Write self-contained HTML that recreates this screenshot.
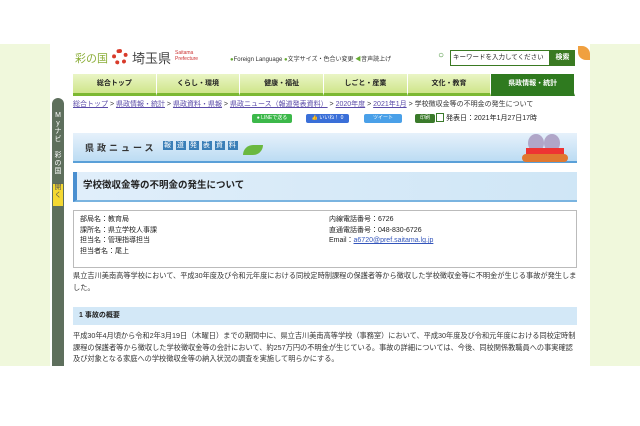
<!DOCTYPE html>
<html><head><meta charset="utf-8"><style>
*{margin:0;padding:0;box-sizing:border-box}
body{width:640px;height:426px;background:#fff;font-family:"Liberation Sans","Noto Sans CJK JP",sans-serif;position:relative;overflow:hidden;color:#222}
.bg{position:absolute;left:0;top:44px;width:640px;height:322px;background:#f0f8dc}
.main{position:absolute;left:50px;top:44px;width:540px;height:322px;background:#fff}
.side{position:absolute;left:52px;top:98px;width:12px;height:268px;background:#5e6f5d;border-radius:8px 8px 0 0;color:#fff;font-size:7px;text-align:center;line-height:8px;padding-top:14px}
.side .o{background:#f5d832;color:#555;margin:8px 1px 0;height:22px}
.a{position:absolute}
.nav{left:73px;top:74px;width:502px;height:22px;display:flex}
.nav div{flex:1;background:linear-gradient(#eaf5c6,#cfe58a);border-bottom:3px solid #7cb832;font-size:7px;font-weight:bold;text-align:center;line-height:19px;border-right:1px solid #fff}
.nav div.on{background:#2f7a1f;color:#fff;border-bottom-color:#2f7a1f}
.bc{left:73px;top:99px;font-size:7px;color:#333;white-space:nowrap}
.bc u{color:#5a4aa8}
.btn{top:114px;height:9px;font-size:5px;color:#fff;border-radius:2px;text-align:center;line-height:9px}
.nh{left:73px;top:133px;width:504px;height:30px;background:linear-gradient(#e6f1fb,#bcdcf3);border-bottom:2px solid #5aa0d8}
.ti{left:73px;top:172px;width:504px;height:30px;background:linear-gradient(90deg,#e0eefa,#cfe6f6);border-left:4px solid #4a8fd0;border-bottom:2px solid #7ab4e0;font-size:9.5px;font-weight:bold;line-height:28px;padding-left:6px}
.info{left:73px;top:210px;width:504px;height:58px;border:1px solid #bbb;font-size:7px;line-height:10.5px;padding:4px 6px}
.p{font-size:7.2px;line-height:11.5px;color:#333}
</style></head><body>
<div class="bg"></div><div class="main"></div>
<div class="side">M<br>y<br>ナ<br>ビ<br><br>彩<br>の<br>国<div class="o">開<br>く</div></div>
<div class="a" style="left:75px;top:50px;font-size:11px;color:#8cae3a">彩の国</div>
<div class="a" style="left:112px;top:49px;width:16px;height:16px;border-radius:50%;border:4px dotted #d83a2a"></div>
<div class="a" style="left:132px;top:48px;font-size:13px;color:#444">埼玉県</div>
<div class="a" style="left:175px;top:50px;font-size:5px;color:#c33;line-height:6px">Saitama<br>Prefecture</div>
<div class="a" style="left:230px;top:54px;font-size:6px;color:#333;white-space:nowrap"><span style="color:#6a3">●</span>Foreign Language <span style="color:#6a3">●</span>文字サイズ・色合い変更 <span style="color:#6a3">◀</span>音声読上げ</div>
<div class="a" style="left:438px;top:50px;font-size:10px;color:#3a8a2a">○</div>
<div class="a" style="left:450px;top:50px;width:100px;height:16px;border:1px solid #3a7a22;font-size:6.5px;line-height:14px;padding-left:2px;white-space:nowrap;overflow:hidden">キーワードを入力してください</div>
<div class="a" style="left:550px;top:50px;width:25px;height:16px;background:#3a7a22;color:#fff;font-size:7px;line-height:16px;text-align:center;font-weight:bold">検索</div>
<div class="a" style="left:578px;top:46px;width:12px;height:14px;background:#f0a040;border-radius:0 8px 0 8px"></div>
<div class="a nav"><div>総合トップ</div><div>くらし・環境</div><div>健康・福祉</div><div>しごと・産業</div><div>文化・教育</div><div class="on">県政情報・統計</div></div>
<div class="a bc"><u>総合トップ</u> &gt; <u>県政情報・統計</u> &gt; <u>県政資料・県報</u> &gt; <u>県政ニュース（報道発表資料）</u> &gt; <u>2020年度</u> &gt; <u>2021年1月</u> &gt; 学校徴収金等の不明金の発生について</div>
<div class="a btn" style="left:252px;width:40px;background:#3cb84a">● LINEで送る</div>
<div class="a btn" style="left:306px;width:43px;background:#3a6fd8">👍 いいね！ 0</div>
<div class="a btn" style="left:364px;width:38px;background:#4aa0e8">ツイート</div>
<div class="a btn" style="left:415px;width:20px;background:#3a7a2a">印刷</div>
<div class="a" style="left:436px;top:113px;width:8px;height:9px;border:1.5px solid #3a7a2a"></div>
<div class="a" style="left:446px;top:113px;font-size:7px">発表日：2021年1月27日17時</div>
<div class="a nh"></div>
<div class="a" style="left:85px;top:141px;font-size:9px;letter-spacing:3px;font-weight:bold;color:#333">県政ニュース</div>
<div class="a" style="left:163px;top:140px;font-size:7px;color:#fff;letter-spacing:1px;white-space:nowrap"><span style="background:#3a7fb8;padding:1px">報</span> <span style="background:#3a7fb8;padding:1px">道</span> <span style="background:#3a7fb8;padding:1px">発</span> <span style="background:#3a7fb8;padding:1px">表</span> <span style="background:#3a7fb8;padding:1px">資</span> <span style="background:#3a7fb8;padding:1px">料</span></div>
<div class="a" style="left:243px;top:145px;width:20px;height:10px;background:#6ab840;border-radius:10px 0 10px 0"></div>
<div class="a" style="left:522px;top:134px;width:48px;height:30px"><div class="a" style="left:6px;top:0;width:16px;height:18px;background:#b0a6c8;border-radius:50%"></div><div class="a" style="left:22px;top:0;width:16px;height:18px;background:#b0a6c8;border-radius:50%"></div><div class="a" style="left:4px;top:14px;width:38px;height:8px;background:#e33;"></div><div class="a" style="left:0;top:20px;width:46px;height:8px;background:#e07830;border-radius:4px"></div></div>
<div class="a ti">学校徴収金等の不明金の発生について</div>
<div class="a info"><div style="position:absolute;left:6px;top:4px">部局名：教育局<br>課所名：県立学校人事課<br>担当名：管理指導担当<br>担当者名：尾上</div><div style="position:absolute;left:255px;top:4px">内線電話番号：6726<br>直通電話番号：048-830-6726<br>Email：<u style="color:#3355bb">a6720@pref.saitama.lg.jp</u></div></div>
<div class="a p" style="left:73px;top:270px;width:504px">県立吉川美南高等学校において、平成30年度及び令和元年度における同校定時制課程の保護者等から徴収した学校徴収金等に不明金が生じる事故が発生しました。</div>
<div class="a" style="left:73px;top:307px;width:504px;height:18px;background:#d3e8f7;font-size:7px;font-weight:bold;line-height:18px;padding-left:6px">1 事故の概要</div>
<div class="a p" style="left:73px;top:330px;width:504px">平成30年4月頃から令和2年3月19日（木曜日）までの期間中に、県立吉川美南高等学校（事務室）において、平成30年度及び令和元年度における同校定時制課程の保護者等から徴収した学校徴収金等の会計において、約257万円の不明金が生じている。事故の詳細については、今後、同校関係教職員への事実確認及び対象となる家庭への学校徴収金等の納入状況の調査を実施して明らかにする。</div>
</body></html>
